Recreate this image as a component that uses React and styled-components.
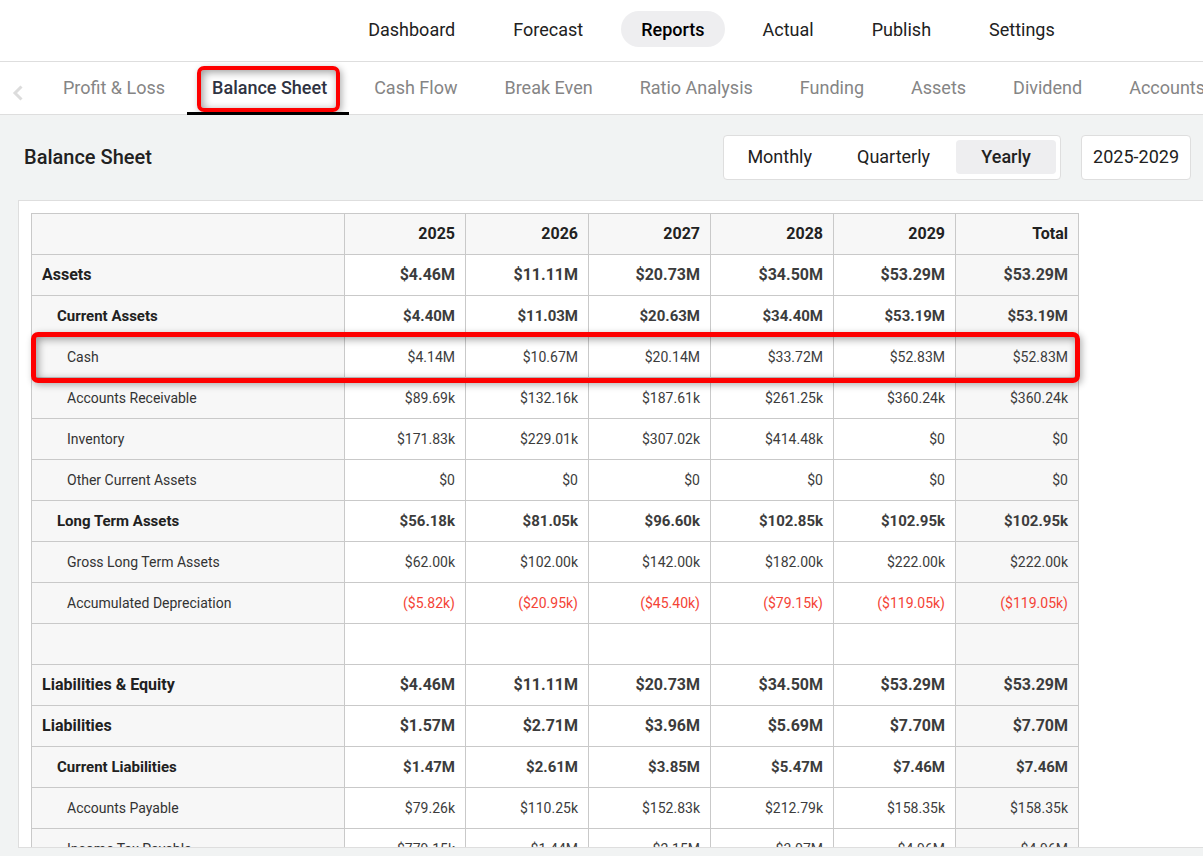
import React from 'react'
import styled, { createGlobalStyle } from 'styled-components'

const GlobalStyle = createGlobalStyle`
  * { box-sizing: border-box; }
  body {
    margin: 0;
    font-family: Roboto, sans-serif;
    color: #212121;
    background: #f1f3f3;
  }
  button { font: inherit; color: inherit; cursor: pointer; }
  a { color: inherit; text-decoration: none; }
`

const Page = styled.div`
  display: flex;
  flex-direction: column;
  height: 100vh;
  overflow: hidden;
`

const TopNav = styled.nav`
  display: flex;
  flex: none;
  justify-content: center;
  gap: 18px;
  padding: 11px 0 14px 220px;
  background: #fff;
  border-bottom: 1px solid #dedede;
`

const TopLink = styled.a`
  height: 36px;
  padding: 0 20px;
  border-radius: 18px;
  font-size: 18px;
  line-height: 38px;
  font-weight: ${p => (p.$active ? 500 : 400)};
  color: ${p => (p.$active ? '#000' : '#212121')};
  background: ${p => (p.$active ? '#eeeef0' : 'transparent')};
`

const TabBar = styled.nav`
  display: flex;
  flex: none;
  height: 53px;
  overflow: hidden;
  background: #fff;
  box-shadow: inset 0 -1px #dedede;
`

const ScrollButton = styled.button`
  display: flex;
  flex: none;
  align-items: center;
  width: 38px;
  padding: 8px 0 0 12px;
  border: 0;
  background: none;
`

const Tab = styled.a`
  position: relative;
  flex: none;
  height: 53px;
  padding: 0 22px 0 25px;
  font-size: 18px;
  line-height: 51px;
  white-space: nowrap;
  font-weight: ${p => (p.$active ? 500 : 400)};
  color: ${p => (p.$active ? '#2f3342' : '#858585')};
  border-bottom: ${p => (p.$active ? '3px solid #000' : '0')};
`

const Highlight = styled.span`
  position: absolute;
  border: ${p => (p.$row ? 5 : 4)}px solid #fe0000;
  border-radius: 7px;
  inset: ${p => (p.$row ? '-5px -1px -5px -1px' : '4px 9px 0 10px')};
  box-shadow: 2px 2px 7px rgba(0, 0, 0, 0.3), inset 2px 2px 9px rgba(0, 0, 0, 0.4);
  pointer-events: none;
`

const Header = styled.header`
  display: flex;
  flex: none;
  align-items: center;
  gap: 20px;
  padding: 20px 12px 20px 24px;
`

const Title = styled.h1`
  flex: 1;
  margin: 0;
  padding-bottom: 2px;
  font-size: 20px;
  font-weight: 500;
`

const Segmented = styled.div`
  display: flex;
  gap: 7px;
  height: 45px;
  padding: 4px;
  border: 1px solid #dedede;
  border-radius: 4px;
  background: #fff;
`

const Segment = styled.button`
  min-width: 100px;
  height: 34px;
  padding: 0 19px 2px;
  border: 0;
  border-radius: 4px;
  font-size: 18px;
  font-weight: ${p => (p.$active ? 500 : 400)};
  background: ${p => (p.$active ? '#eeeef0' : 'transparent')};
`

const RangeButton = styled.button`
  height: 45px;
  padding: 0 11px 2px;
  border: 1px solid #dedede;
  border-radius: 4px;
  font-size: 18px;
  background: #fff;
`

const Panel = styled.main`
  flex: 1;
  min-height: 0;
  margin: 0 0 8px 18px;
  padding: 12px;
  overflow: auto;
  scrollbar-width: none;
  background: #fff;
  border: 1px solid #dedede;
  border-right: 0;
`

const Table = styled.table`
  width: 1048px;
  table-layout: fixed;
  border-collapse: collapse;
`

const Row = styled.tr`
  position: ${p => (p.$marked ? 'relative' : 'static')};
  height: 41px;
  font-size: ${p => [16, 15, 14][p.$level]}px;
  font-weight: ${p => (p.$level === 2 ? 400 : 700)};
`

const HeadCell = styled.th`
  width: ${p => (p.$width ? `${p.$width}px` : 'auto')};
  padding: 0 10px 2px;
  border: 1px solid #c9c9c9;
  text-align: right;
  font-weight: 700;
  background: #f7f7f7;
`

const NameCell = styled.th`
  padding: 0 10px ${p => (p.$level === 0 ? 2 : 0)}px ${p => [10, 25, 35][p.$level]}px;
  border: 1px solid #c9c9c9;
  text-align: left;
  font-weight: inherit;
  color: ${p => (p.$level === 2 ? '#333' : '#212121')};
  background: #f7f7f7;
`

const ValueCell = styled.td`
  padding: 0 10px ${p => (p.$level === 0 ? 2 : 0)}px;
  border: 1px solid #c9c9c9;
  text-align: right;
  color: ${p => (p.$negative ? '#f44336' : '#3c3c3c')};
  background: ${p => (p.$total ? '#f7f7f7' : '#fff')};
`

const menu = ['Dashboard', 'Forecast', 'Reports', 'Actual', 'Publish', 'Settings']
const tabs = ['Profit & Loss', 'Balance Sheet', 'Cash Flow', 'Break Even', 'Ratio Analysis', 'Funding', 'Assets', 'Dividend', 'Accounts']
const periods = ['Monthly', 'Quarterly', 'Yearly']
const columns = [
  { label: '2025', width: 121 },
  { label: '2026', width: 123 },
  { label: '2027', width: 122 },
  { label: '2028', width: 123 },
  { label: '2029', width: 122 },
  { label: 'Total' },
]

const rows = [
  { name: 'Assets', level: 0, values: ['$4.46M', '$11.11M', '$20.73M', '$34.50M', '$53.29M', '$53.29M'] },
  { name: 'Current Assets', level: 1, values: ['$4.40M', '$11.03M', '$20.63M', '$34.40M', '$53.19M', '$53.19M'] },
  { name: 'Cash', level: 2, marked: true, values: ['$4.14M', '$10.67M', '$20.14M', '$33.72M', '$52.83M', '$52.83M'] },
  { name: 'Accounts Receivable', level: 2, values: ['$89.69k', '$132.16k', '$187.61k', '$261.25k', '$360.24k', '$360.24k'] },
  { name: 'Inventory', level: 2, values: ['$171.83k', '$229.01k', '$307.02k', '$414.48k', '$0', '$0'] },
  { name: 'Other Current Assets', level: 2, values: ['$0', '$0', '$0', '$0', '$0', '$0'] },
  { name: 'Long Term Assets', level: 1, values: ['$56.18k', '$81.05k', '$96.60k', '$102.85k', '$102.95k', '$102.95k'] },
  { name: 'Gross Long Term Assets', level: 2, values: ['$62.00k', '$102.00k', '$142.00k', '$182.00k', '$222.00k', '$222.00k'] },
  { name: 'Accumulated Depreciation', level: 2, values: ['($5.82k)', '($20.95k)', '($45.40k)', '($79.15k)', '($119.05k)', '($119.05k)'] },
  { name: '', level: 2, values: ['', '', '', '', '', ''] },
  { name: 'Liabilities & Equity', level: 0, values: ['$4.46M', '$11.11M', '$20.73M', '$34.50M', '$53.29M', '$53.29M'] },
  { name: 'Liabilities', level: 0, values: ['$1.57M', '$2.71M', '$3.96M', '$5.69M', '$7.70M', '$7.70M'] },
  { name: 'Current Liabilities', level: 1, values: ['$1.47M', '$2.61M', '$3.85M', '$5.47M', '$7.46M', '$7.46M'] },
  { name: 'Accounts Payable', level: 2, values: ['$79.26k', '$110.25k', '$152.83k', '$212.79k', '$158.35k', '$158.35k'] },
  { name: 'Income Tax Payable', level: 2, values: ['$779.15k', '$1.44M', '$2.15M', '$3.07M', '$4.96M', '$4.96M'] },
]

const BalanceTable = () => (
  <Table>
    <thead>
      <Row $level={0}>
        <HeadCell $width={313} />
        {columns.map(c => <HeadCell key={c.label} scope="col" $width={c.width}>{c.label}</HeadCell>)}
      </Row>
    </thead>
    <tbody>
      {rows.map((row, i) => (
        <Row key={i} $level={row.level} $marked={row.marked}>
          <NameCell scope="row" $level={row.level}>
            {row.name}
            {row.marked && <Highlight $row />}
          </NameCell>
          {row.values.map((v, j) => (
            <ValueCell key={j} $level={row.level} $total={j === 5} $negative={v.startsWith('(')}>{v}</ValueCell>
          ))}
        </Row>
      ))}
    </tbody>
  </Table>
)

const App = () => {
  return (
    <Page>
      <GlobalStyle />
      <TopNav>
        {menu.map(m => <TopLink key={m} href="#" $active={m === 'Reports'}>{m}</TopLink>)}
      </TopNav>
      <TabBar>
        <ScrollButton aria-label="Previous tabs">
          <svg width="12" height="16" viewBox="0 0 12 16" fill="none" stroke="#dcdcdc" strokeWidth="3">
            <path d="M9.5 1.5 L3 8 L9.5 14.5" />
          </svg>
        </ScrollButton>
        {tabs.map(t => (
          <Tab key={t} href="#" $active={t === 'Balance Sheet'}>
            {t}
            {t === 'Balance Sheet' && <Highlight />}
          </Tab>
        ))}
      </TabBar>
      <Header>
        <Title>Balance Sheet</Title>
        <Segmented>
          {periods.map(p => <Segment key={p} $active={p === 'Yearly'}>{p}</Segment>)}
        </Segmented>
        <RangeButton>2025-2029</RangeButton>
      </Header>
      <Panel>
        <BalanceTable />
      </Panel>
    </Page>
  )
}

export default App
